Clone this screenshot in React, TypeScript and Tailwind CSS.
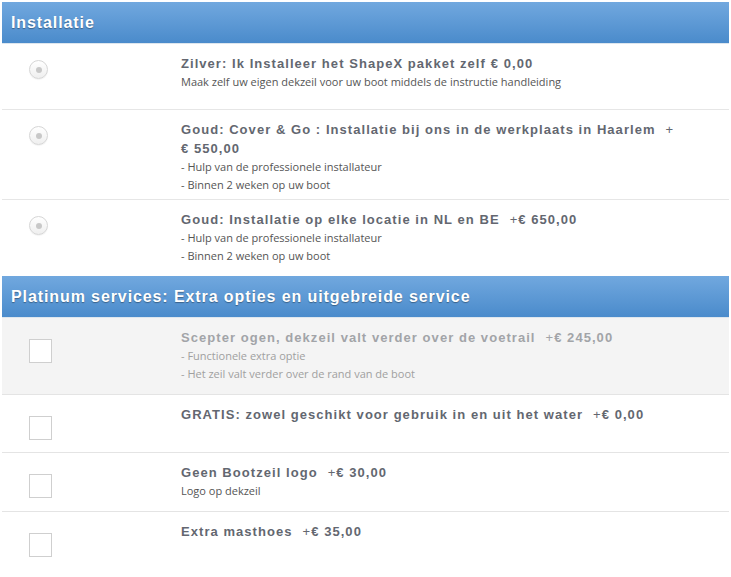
import React from "react";

type Opt = {
  title: string;
  price: string;
  lines: string[];
  muted?: boolean;
};

const installatie: Opt[] = [
  {
    title: "Zilver: Ik Installeer het ShapeX pakket zelf",
    price: "€\u00a00,00",
    lines: ["Maak zelf uw eigen dekzeil voor uw boot middels de instructie handleiding"],
  },
  {
    title: "Goud: Cover & Go : Installatie bij ons in de werkplaats in Haarlem",
    price: "+|€\u00a0550,00",
    lines: ["- Hulp van de professionele installateur", "- Binnen 2 weken op uw boot"],
  },
  {
    title: "Goud: Installatie op elke locatie in NL en BE",
    price: "+€\u00a0650,00",
    lines: ["- Hulp van de professionele installateur", "- Binnen 2 weken op uw boot"],
  },
];

const platinum: Opt[] = [
  {
    title: "Scepter ogen, dekzeil valt verder over de voetrail",
    price: "+€\u00a0245,00",
    lines: ["- Functionele extra optie", "- Het zeil valt verder over de rand van de boot"],
    muted: true,
  },
  {
    title: "GRATIS: zowel geschikt voor gebruik in en uit het water",
    price: "+€\u00a00,00",
    lines: [],
  },
  {
    title: "Geen Bootzeil logo",
    price: "+€\u00a030,00",
    lines: ["Logo op dekzeil"],
  },
  {
    title: "Extra masthoes",
    price: "+€\u00a035,00",
    lines: [],
  },
];

const sans = { fontFamily: '"Liberation Sans", Arial, sans-serif' };

function Header({ children }: { children: React.ReactNode }) {
  return (
    <div className="h-[42px] flex items-center pl-[9px] bg-gradient-to-b from-[#71a8df] to-[#4a8bcb] border-b border-[#dde6ee]">
      <h2
        className="text-white text-[16px] font-bold tracking-[0.9px] [text-shadow:0_1px_1px_rgba(0,0,0,0.35)]"
        style={sans}
      >
        {children}
      </h2>
    </div>
  );
}

function Price({ price }: { price: string }) {
  if (price.startsWith("+")) {
    const rest = price.replace(/^\+\|?/, "");
    return (
      <>
        <span className="ml-[10px] font-normal">+</span>
        {price.includes("|") && <wbr />}
        <span className="whitespace-nowrap">{rest}</span>
      </>
    );
  }
  return <span className="ml-[5px] whitespace-nowrap">{price}</span>;
}

function Text({ o }: { o: Opt }) {
  return (
    <div className="flex-1 pr-3">
      <div
        className={`text-[13px] leading-[19px] font-bold tracking-[1.05px] ${
          o.muted ? "text-[#a2a4a8]" : "text-[#636770]"
        }`}
        style={sans}
      >
        {o.title}
        <Price price={o.price} />
      </div>
      {o.lines.map((l) => (
        <div
          key={l}
          className={`text-[11px] leading-[18px] ${o.muted ? "text-[#a0a0a0]" : "text-[#555]"}`}
          style={{ fontFamily: '"Open Sans", sans-serif' }}
        >
          {l}
        </div>
      ))}
    </div>
  );
}

function RadioRow({ o, last }: { o: Opt; last?: boolean }) {
  return (
    <div className={`flex min-h-[66px] pt-[10px] pb-[5px] ${last ? "" : "border-b border-[#e6e6e6]"}`}>
      <div className="w-[179px] shrink-0 pl-[27px] pt-[6px]">
        <span className="flex w-[19px] h-[19px] rounded-full border border-[#d6d6d6] bg-gradient-to-b from-white to-[#efefef] items-center justify-center shadow-[0_1px_1px_rgba(0,0,0,0.05)]">
          <span className="w-[6px] h-[6px] rounded-full bg-[#c8c8c8]" />
        </span>
      </div>
      <Text o={o} />
    </div>
  );
}

function CheckRow({ o, last }: { o: Opt; last?: boolean }) {
  return (
    <div
      className={`flex min-h-[58px] pt-[10px] pb-[11px] ${o.muted ? "bg-[#f4f4f4]" : "bg-white"} ${
        last ? "" : "border-b border-[#e4e4e4]"
      }`}
    >
      <div className="w-[179px] shrink-0 pl-[27px] pt-[11px]">
        <span className="block w-[23px] h-[24px] border border-[#cfcfcf] bg-white" />
      </div>
      <Text o={o} />
    </div>
  );
}

export default function App() {
  return (
    <div className="bg-white w-[731px] h-[577px] overflow-hidden px-[2px] pt-[2px]">
      <Header>Installatie</Header>
      {installatie.map((o, i) => (
        <RadioRow key={o.title} o={o} last={i === installatie.length - 1} />
      ))}
      <div className="h-[6px]" />
      <Header>Platinum services: Extra opties en uitgebreide service</Header>
      {platinum.map((o, i) => (
        <CheckRow key={o.title} o={o} last={i === platinum.length - 1} />
      ))}
    </div>
  );
}
